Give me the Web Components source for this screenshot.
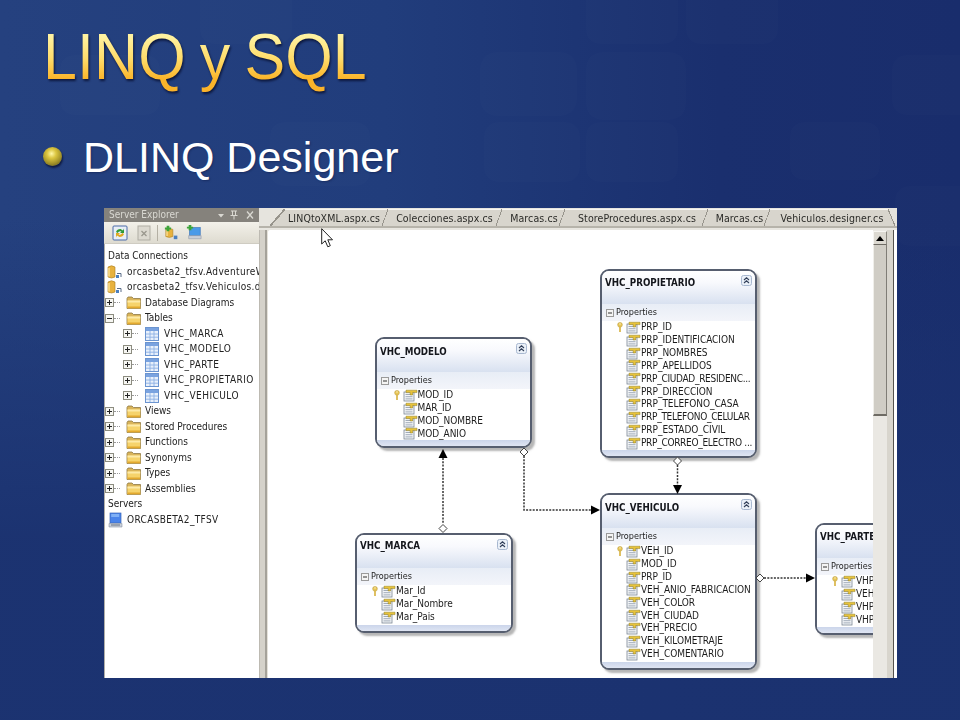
<!DOCTYPE html>
<html><head><meta charset="utf-8">
<style>
html,body{margin:0;padding:0;background:#1b3270}
</style></head><body>
<x-slide>
  <x-title slot="title">LINQ y SQL</x-title>
  <x-bullet slot="bullet">DLINQ Designer</x-bullet>
  <x-window slot="window"></x-window>
</x-slide>
<script>
const FONT='"DejaVu Sans","Liberation Sans",sans-serif';
function def(name,css,html,extra){
  customElements.define(name,class extends HTMLElement{
    constructor(){super();const r=this.attachShadow({mode:'open'});
      r.innerHTML='<style>'+css+'</style>'+(typeof html==='function'?html(this):html);}
    connectedCallback(){ if(extra) extra(this); }
  });
}
const ICON={
 folder:'<svg width="16" height="13" viewBox="0 0 16 13"><path d="M1 2.500L2 1H6L7.500 2.500H14.500V12.500H1Z" fill="#d9b45a" stroke="#8f7a45" stroke-width=".8"/><path d="M1.500 4.500H14.200V12.200H1.500Z" fill="#f6d36b"/><path d="M1.500 4.500H14.200V6.500H1.500Z" fill="#fdeaa8"/><path d="M1.500 10.500H14.200V12.200H1.500Z" fill="#e3a92e"/></svg>',
 table:'<svg width="14" height="14" viewBox="0 0 14 14"><rect x=".5" y=".5" width="13" height="13" fill="#e8f0fb" stroke="#6b94d0"/><rect x="1" y="1" width="12" height="3" fill="#7aa3e0"/><path d="M1 7H13M1 10.200H13M5 4V13M9 4V13" stroke="#8db0e4" stroke-width=".9"/></svg>',
 db:'<svg width="16" height="16" viewBox="0 0 16 16"><path d="M1 3Q4.500 .5 8 3V13Q4.500 15 1 13Z" fill="#e8b23e" stroke="#a87c22" stroke-width=".6"/><path d="M2 4V12.500" stroke="#fbe39a" stroke-width="1.400"/><rect x="9" y="11" width="3" height="3" fill="#4a7fc0"/><path d="M10 9.500H14V13" fill="none" stroke="#5a6c88"/></svg>',
 server:'<svg width="15" height="16" viewBox="0 0 15 16"><rect x="2" y="1" width="11" height="10" fill="#4a84ea" stroke="#3a66b8" stroke-width=".7"/><rect x="3.200" y="2" width="8" height="3" fill="#7fb0f6"/><path d="M1 11.500H14V15H1Z" fill="#c9cfd8" stroke="#8a94a4" stroke-width=".6"/><path d="M3 13H12" stroke="#6a7484"/></svg>',
 plus:'<svg width="9" height="9" viewBox="0 0 9 9"><rect x=".5" y=".5" width="8" height="8" fill="#f6f6f2" stroke="#8c8c80"/><path d="M2 4.500H7M4.500 2V7" stroke="#222"/></svg>',
 minus:'<svg width="9" height="9" viewBox="0 0 9 9"><rect x=".5" y=".5" width="8" height="8" fill="#f6f6f2" stroke="#8c8c80"/><path d="M2 4.500H7" stroke="#222"/></svg>',
 prop:'<svg width="15" height="13" viewBox="0 0 15 13"><rect x="1" y="3" width="10" height="9" fill="#f4f6f8" stroke="#7c8794" stroke-width=".8"/><path d="M2.500 5.500H9.500M2.500 7.700H9.500M2.500 9.900H9.500" stroke="#8a97a8" stroke-width=".8"/><path d="M3 1.200H14V3.600H9.600V6H7.200V3.600H3Z" fill="#e8c33a" stroke="#8c7a22" stroke-width=".5"/></svg>',
 key:'<svg width="6" height="11" viewBox="0 0 6 11"><circle cx="3" cy="2.800" r="2.400" fill="#e7c558" stroke="#b89a3a" stroke-width=".5"/><path d="M3 5V10" stroke="#d9b548" stroke-width="1.700"/><circle cx="3" cy="2" r=".7" fill="#fff7c8"/></svg>'
};

def('x-slide',`
 :host{display:block;position:relative;width:960px;height:720px;overflow:hidden;
  background:linear-gradient(90deg,#25417f 0%,#213d7c 40%,#1a2f6e 75%,#192d6c 100%)}
 .bg{position:absolute;inset:0;z-index:0}
 .flow{position:relative;z-index:1;display:flex;flex-direction:column;height:720px;box-sizing:border-box;padding:0 63px 42px 43px}
 .t{height:99px;display:flex;align-items:flex-end}
 .b{height:109px;box-sizing:border-box;padding-top:37px}
 .w{margin-left:61px}
`,`
 <svg class="bg" width="960" height="720" viewBox="0 0 960 720">
  <defs><linearGradient id="fade" x1="0" y1="0" x2="0" y2="1"><stop offset="0" stop-color="#1b3270" stop-opacity="0"/><stop offset=".3" stop-color="#1b3270" stop-opacity="0"/><stop offset=".75" stop-color="#1b3270" stop-opacity=".95"/></linearGradient></defs>
  <g fill="#ffffff" fill-opacity=".012">
   <rect x="586" y="-20" width="92" height="64" rx="14"/><rect x="686" y="-20" width="92" height="64" rx="14"/>
   <rect x="480" y="52" width="97" height="64" rx="16"/><rect x="586" y="52" width="100" height="68" rx="16"/>
   <rect x="892" y="55" width="90" height="60" rx="14"/>
   <rect x="484" y="122" width="96" height="60" rx="14"/><rect x="586" y="122" width="92" height="60" rx="14"/>
   <rect x="790" y="122" width="90" height="58" rx="14"/><rect x="895" y="186" width="80" height="60" rx="14"/>
   <rect x="200" y="-20" width="92" height="64" rx="14"/><rect x="270" y="122" width="100" height="64" rx="14"/>
   <rect x="60" y="55" width="100" height="60" rx="14"/>
  </g>
  <rect x="0" y="0" width="960" height="720" fill="url(#fade)"/>
 </svg>
 <div class="flow"><div class="t"><slot name="title"></slot></div><div class="b"><slot name="bullet"></slot></div><div class="w"><slot name="window"></slot></div></div>
`);

def('x-title',`
 :host{display:block;font:61px/1 "Liberation Sans",Arial,sans-serif;word-spacing:-3px;letter-spacing:.1px;filter:drop-shadow(1px 2px 1px rgba(8,16,50,.85))}
 span{background:linear-gradient(180deg,#fff2a0 15%,#ffdc6a 45%,#fbb52a 72%,#f9b02a 100%);-webkit-background-clip:text;background-clip:text;color:transparent;-webkit-text-fill-color:transparent;display:inline-block;padding-bottom:10px;transform:scaleY(1.05);transform-origin:0 75%}
`,`<span><slot></slot></span>`);

def('x-bullet',`
 :host{display:flex;align-items:center;gap:21px;font:43px/1 "Liberation Sans",Arial,sans-serif;color:#fff;text-shadow:1px 1px 2px rgba(10,20,60,.4)}
 i{display:block;width:19px;height:19px;border-radius:50%;flex:none;margin-bottom:3px;background:radial-gradient(circle at 45% 35%,#fff8a8 0,#dcc640 28%,#a3932a 60%,#4c4718 100%);box-shadow:1px 2px 2px rgba(5,10,40,.7)}
`,`<i></i><span><slot></slot></span>`);

def('x-tree-row',`
 :host{display:flex;align-items:center;height:15.5px;font:10px/1 ${FONT};font-stretch:condensed;color:#222;white-space:nowrap}
 :host([level="2"]){letter-spacing:.45px}
 :host([icon]){letter-spacing:.35px}
 .ind{flex:none;display:flex;align-items:center}
 .dots{width:6px;height:0;border-top:1px dotted #999;flex:none}
 .ic{display:flex;flex:none}
`,host=>{
 const lvl=host.getAttribute('level'),ex=host.getAttribute('exp'),ic=host.getAttribute('icon');
 let s='';
 if(lvl==='1') s+=`<span class="ind" style="margin-left:1px">${ICON[ex]}<span class="dots" style="margin-right:6px"></span></span><span class="ic" style="margin-right:3px">${ICON.folder}</span>`;
 else if(lvl==='2') s+=`<span class="ind" style="margin-left:19px">${ICON.plus}<span class="dots" style="margin-right:7px"></span></span><span class="ic" style="margin-right:5px">${ICON.table}</span>`;
 else if(ic) s+=`<span class="ic" style="margin:0 4px 0 ${ic==='server'?4:3}px">${ICON[ic]}</span>`;
 else s+=`<span style="width:4px;flex:none"></span>`;
 return s+'<slot></slot>';
});

def('x-panel',`
 :host{display:flex;flex-direction:column;width:155px;height:470px;background:#fff;overflow:hidden;flex:none;box-shadow:inset 1px 0 0 #b0aea8}
 .cap{height:14px;background:#85827c;color:#d9d8d2;font:10px/14px ${FONT};font-stretch:condensed;display:flex;align-items:center;justify-content:space-between;padding:0 4px 0 5px;flex:none}
 .cap svg{display:block}
 .bar{height:22px;background:linear-gradient(#f3f1ea,#dedbd0);display:flex;align-items:center;padding-left:8px;box-sizing:border-box;flex:none;border-bottom:1px solid #cfccc2}
 .sep{width:1px;height:16px;background:#b4b0a4;margin:0 6px}
 .tree{padding-top:4.500px}
`,`
 <div class="cap"><span>Server Explorer</span>
  <svg width="38" height="10" viewBox="0 0 38 10"><path d="M1 4H7L4 7.500Z" fill="#d9d8d2"/><path d="M14 1H20M15.500 1V5.500H18.500V1M13.500 5.500H20.500M17 5.500V9.500" stroke="#d9d8d2" fill="none"/><path d="M30 1.500L36 8.500M36 1.500L30 8.500" stroke="#d9d8d2" stroke-width="1.300"/></svg></div>
 <div class="bar">
  <svg width="16" height="16" viewBox="0 0 16 16" style="margin-right:9px"><rect x="1" y="1" width="14" height="14" rx="1" fill="#e8eef6" stroke="#4a6aa8"/><path d="M4 7Q5 4 8.500 4L11 5.500L12 3.500V8H8L9.500 6.500Q7 5.600 5.600 8Z" fill="#2f9a34"/><path d="M12 9Q11 12 7.500 12L5 10.500L4 12.500V8H8L6.500 9.500Q9 10.400 10.400 8Z" fill="#e0a820"/></svg>
  <svg width="14" height="16" viewBox="0 0 14 16"><rect x="1" y="1" width="12" height="14" fill="#dcd9d0" stroke="#b0ada4"/><path d="M4.500 6L9.500 11M9.500 6L4.500 11" stroke="#9a978e" stroke-width="1.300"/></svg>
  <span class="sep"></span>
  <svg width="16" height="17" viewBox="0 0 18 17" style="margin-right:6px"><path d="M2 5Q6 3 10 5V13Q6 15 2 13Z" fill="#e8b23e" stroke="#a87c22" stroke-width=".6"/><path d="M3.400 6V12.500" stroke="#fbe39a" stroke-width="1.400"/><path d="M3 1H6V3H8V5H6V7H3V5H1V3H3Z" fill="#3da43a"/><rect x="11" y="12" width="4" height="4" fill="#4a7fc0"/></svg>
  <svg width="16" height="17" viewBox="0 0 18 17"><rect x="4" y="3" width="12" height="9" fill="#4a9ae8" stroke="#2f6eb8" stroke-width=".7"/><path d="M3 12H17V15.500H3Z" fill="#c9cfd8" stroke="#8a94a4" stroke-width=".6"/><path d="M3 0H6V2H8V4H6V6H3V4H1V2H3Z" fill="#3da43a"/></svg>
 </div>
 <div class="tree"><slot></slot></div>
`);

def('x-tab',`
 :host{display:block;position:relative;flex:none;height:17px;font:10.5px/16px ${FONT};font-stretch:condensed;letter-spacing:.1px;color:#2b2b28;white-space:nowrap;box-sizing:border-box;text-align:center;background:#d8d5cd;border-top:1px solid #f6f5f1;border-right:1px solid #97948c}
 :host::before{content:"";position:absolute;left:calc(-1 * var(--sl,6px));top:-1px;bottom:0;width:var(--sl,6px);background:linear-gradient(to bottom right,transparent 46%,#97948c 46%,#97948c 54%,#d8d5cd 54%)}
 :host([last]){border-right:0}
 :host([last])::after{content:"";position:absolute;right:-7px;top:-1px;bottom:0;width:7px;background:linear-gradient(to bottom left,transparent 46%,#97948c 46%,#97948c 54%,#d8d5cd 54%)}
`,`<slot></slot>`);

def('x-tabstrip',`
 :host{display:flex;align-items:flex-end;height:20px;background:#e6e4de;box-sizing:border-box;padding-left:26px;border-bottom:2px solid #b6b3aa;overflow:hidden;flex:none}
`,`<slot></slot>`);

def('x-prop',`
 :host{display:flex;align-items:center;height:12.850px;font:10px/1 ${FONT};font-stretch:condensed;color:#1c1c1c;white-space:nowrap;letter-spacing:-.05px}
 :host([tight]){letter-spacing:-.3px}
 .k{width:6px;flex:none;display:flex;margin-left:15px;margin-right:3px}
 .i{display:flex;flex:none}
`,h=>`<span class="k">${h.hasAttribute('pk')?ICON.key:''}</span><span class="i">${ICON.prop}</span><slot></slot>`);

def('x-entity',`
 :host{position:absolute;display:flex;flex-direction:column;box-sizing:border-box;border:2px solid #565e6f;border-radius:9px;background:#fff;box-shadow:3px 3px 2px rgba(110,110,110,.5);overflow:hidden;font-family:${FONT}}
 .h{height:33px;flex:none;background:linear-gradient(180deg,#fff 0,#f8f9fd 35%,#d8e1f0 100%);position:relative;padding:var(--tp,6px) 0 0 3px;box-sizing:border-box;font:700 9.700px/14px ${FONT};font-stretch:condensed;color:#14161c;white-space:nowrap}
 .c{position:absolute;right:3px;top:4px;display:flex}
 .s{height:17px;flex:none;background:linear-gradient(#e8edf6,#f3f5fa);display:flex;align-items:center;gap:2px;padding-left:4px;font:9px/1 ${FONT};font-stretch:condensed;color:#1c1c1c}
 .s svg{flex:none}
 .r{flex:1;background:#fff;overflow:hidden}
 .f{height:6px;flex:none;background:linear-gradient(#cbd5ea,#dfe5f3)}
`,h=>`<div class="h">${h.getAttribute('name')}<span class="c"><svg width="11" height="11" viewBox="0 0 11 11"><rect x=".5" y=".5" width="10" height="10" rx="2" fill="#eaf0f8" stroke="#a8b8d0"/><path d="M3 5L5.500 2.800L8 5M3 8L5.500 5.800L8 8" fill="none" stroke="#33405a" stroke-width="1.100"/></svg></span></div>
 <div class="s"><svg width="8" height="8" viewBox="0 0 8 8"><rect x=".5" y=".5" width="7" height="7" fill="#f4f4f4" stroke="#9a9a9a"/><path d="M2 4H6" stroke="#333"/></svg>Properties</div>
 <div class="r"><slot></slot></div><div class="f"></div>`,
 h=>{['x','y','w','h'].forEach((k,i)=>{h.style[['left','top','width','height'][i]]=h.getAttribute(k)+'px'});});

def('x-canvas',`
 :host{display:block;position:absolute;left:0;top:0;width:605px;height:448px;overflow:hidden;background:#fff}
 svg{position:absolute;left:0;top:0;z-index:1}
`,`<svg width="605" height="448" viewBox="268 230 605 448" fill="none">
 <g stroke="#333" stroke-width="1.500" stroke-dasharray="2 1.300">
  <path d="M443 458V524"/><path d="M524 456V510H592"/><path d="M677.500 465V485"/><path d="M764 578H807"/>
 </g>
 <g fill="#000"><path d="M443 449L438.500 458H447.500Z"/><path d="M600 510L591 505.500V514.500Z"/><path d="M677.500 494L673 485H682Z"/><path d="M815 578L806 573.500V582.500Z"/></g>
 <g fill="#fff" stroke="#444" stroke-width="1"><path d="M443 524.500L447 528.500L443 532.500L439 528.500Z"/><path d="M524 448L528 452L524 456L520 452Z"/><path d="M677.500 457L681.500 461L677.500 465L673.500 461Z"/><path d="M760 574L764 578L760 582L756 578Z"/></g>
 </svg><slot></slot>`);

def('x-scrollbar',`
 :host{display:flex;flex-direction:column;width:14px;flex:none;background:#eae8e3;box-sizing:border-box;padding-top:1px}
 .u{height:14px;flex:none;background:#dcd9d1;display:flex;align-items:center;justify-content:center;border:1px solid #f6f5f1;border-right-color:#8d8a82;border-bottom-color:#6e6b64;box-sizing:border-box}
 .t{height:171px;flex:none;background:#d0cdc5;border-left:1px solid #f0efea;border-right:1px solid #807d76;border-bottom:2px solid #6e6b64;box-sizing:border-box}
`,`<div class="u"><svg width="8" height="5" viewBox="0 0 8 5"><path d="M4 0L8 5H0Z" fill="#000"/></svg></div><div class="t"></div>`);

def('x-cursor',`
 :host{position:absolute;left:217px;top:20px;width:13px;height:20px;z-index:5;display:block}
`,`<svg width="13" height="20" viewBox="0 0 13 20"><path d="M.7 .7V16L4.200 12.800L6.800 18.800L9.300 17.700L6.800 11.800H11.500Z" fill="#fff" stroke="#222" stroke-width="1"/></svg>`);

def('x-window',`
 :host{display:flex;position:relative;width:793px;height:470px;background:#e8e6e0;filter:blur(.3px)}
 .doc{flex:1;display:flex;flex-direction:column;min-width:0}
 .body{flex:1;display:flex;min-height:0;padding:2px 0 0 0;background:#e8e6e0}
 .main{position:relative;width:605px;flex:none;overflow:hidden;background:#fff;border-top-left-radius:3px}
 .lft{width:9px;flex:none;background:linear-gradient(90deg,#bdbab2 0,#bdbab2 14%,#d5d2ca 14%,#d5d2ca 66%,#a5a29a 66%,#a5a29a 84%,#e5e2da 84%)}
 .gut{width:6px;flex:none;background:#d8d5cd}
 .ln{width:1px;flex:none;background:#55534e}
 .end{width:3px;flex:none;background:#fff}
 .m{padding-left:1.500px}
`,`
 <x-panel>
  <x-tree-row>Data Connections</x-tree-row>
  <x-tree-row icon="db">orcasbeta2_tfsv.AdventureW</x-tree-row>
  <x-tree-row icon="db">orcasbeta2_tfsv.Vehiculos.d</x-tree-row>
  <x-tree-row level="1" exp="plus">Database Diagrams</x-tree-row>
  <x-tree-row level="1" exp="minus">Tables</x-tree-row>
  <x-tree-row level="2">VHC_MARCA</x-tree-row>
  <x-tree-row level="2">VHC_MODELO</x-tree-row>
  <x-tree-row level="2">VHC_PARTE</x-tree-row>
  <x-tree-row level="2">VHC_PROPIETARIO</x-tree-row>
  <x-tree-row level="2">VHC_VEHICULO</x-tree-row>
  <x-tree-row level="1" exp="plus">Views</x-tree-row>
  <x-tree-row level="1" exp="plus">Stored Procedures</x-tree-row>
  <x-tree-row level="1" exp="plus">Functions</x-tree-row>
  <x-tree-row level="1" exp="plus">Synonyms</x-tree-row>
  <x-tree-row level="1" exp="plus">Types</x-tree-row>
  <x-tree-row level="1" exp="plus">Assemblies</x-tree-row>
  <x-tree-row>Servers</x-tree-row>
  <x-tree-row icon="server">ORCASBETA2_TFSV</x-tree-row>
 </x-panel>
 <div class="doc">
  <x-tabstrip>
   <x-tab style="width:103px;--sl:15px;text-align:left;padding-left:3px">LINQtoXML.aspx.cs</x-tab>
   <x-tab style="width:114px">Colecciones.aspx.cs</x-tab>
   <x-tab style="width:63px;text-indent:2px">Marcas.cs</x-tab>
   <x-tab style="width:143px;text-indent:2px">StoreProcedures.aspx.cs</x-tab>
   <x-tab style="width:62px;text-indent:2px">Marcas.cs</x-tab>
   <x-tab last style="width:118px;text-indent:6px">Vehiculos.designer.cs</x-tab>
  </x-tabstrip>
  <div class="body">
   <div class="lft"></div>
   <div class="main">
    <x-canvas>
     <x-entity name="VHC_PROPIETARIO" x="332" y="39" w="157" h="189" style="--tp:5px">
      <x-prop pk>PRP_ID</x-prop><x-prop>PRP_IDENTIFICACION</x-prop><x-prop>PRP_NOMBRES</x-prop><x-prop>PRP_APELLIDOS</x-prop><x-prop tight>PRP_CIUDAD_RESIDENC...</x-prop><x-prop>PRP_DIRECCION</x-prop><x-prop>PRP_TELEFONO_CASA</x-prop><x-prop tight>PRP_TELEFONO_CELULAR</x-prop><x-prop>PRP_ESTADO_CIVIL</x-prop><x-prop tight>PRP_CORREO_ELECTRO ...</x-prop>
     </x-entity>
     <x-entity name="VHC_MODELO" x="107" y="107" w="157" h="111">
      <x-prop class="m" pk>MOD_ID</x-prop><x-prop class="m">MAR_ID</x-prop><x-prop class="m">MOD_NOMBRE</x-prop><x-prop class="m">MOD_ANIO</x-prop>
     </x-entity>
     <x-entity name="VHC_VEHICULO" x="332" y="263" w="157" h="177" style="--tp:5.500px">
      <x-prop pk>VEH_ID</x-prop><x-prop>MOD_ID</x-prop><x-prop>PRP_ID</x-prop><x-prop>VEH_ANIO_FABRICACION</x-prop><x-prop>VEH_COLOR</x-prop><x-prop>VEH_CIUDAD</x-prop><x-prop>VEH_PRECIO</x-prop><x-prop>VEH_KILOMETRAJE</x-prop><x-prop>VEH_COMENTARIO</x-prop>
     </x-entity>
     <x-entity name="VHC_MARCA" x="87" y="303" w="158" h="100" style="--tp:4px">
      <x-prop pk>Mar_Id</x-prop><x-prop>Mar_Nombre</x-prop><x-prop>Mar_Pais</x-prop>
     </x-entity>
     <x-entity name="VHC_PARTE" x="547" y="293" w="157" h="112" style="--tp:5px">
      <x-prop pk>VHP</x-prop><x-prop>VEH</x-prop><x-prop>VHP</x-prop><x-prop>VHP</x-prop>
     </x-entity>
    </x-canvas>
   </div>
   <x-scrollbar></x-scrollbar>
   <div class="gut"></div><div class="ln"></div><div class="end"></div>
  </div>
 </div>
 <x-cursor></x-cursor>
`);
</script>
</body></html>
